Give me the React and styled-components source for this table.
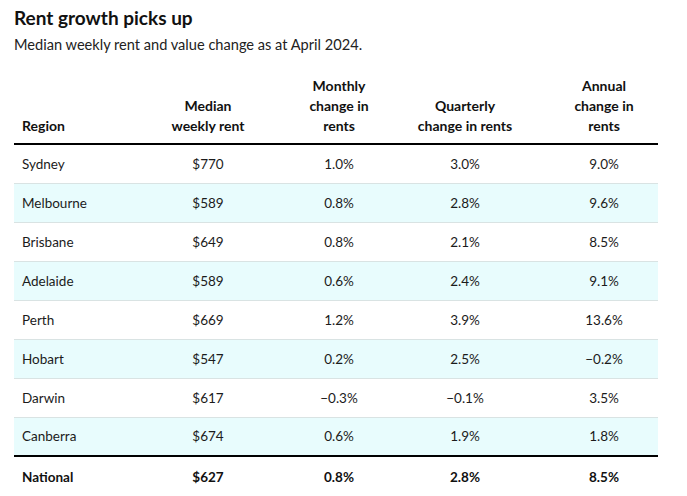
import styled, { createGlobalStyle } from "styled-components";

const GlobalStyle = createGlobalStyle`
  body {
    margin: 0;
    background: #ffffff;
    font-family: Lato, "Noto Sans", sans-serif;
    color: #1b1b1b;
  }
`;

const rows = [
  ["Sydney", "$770", "1.0%", "3.0%", "9.0%"],
  ["Melbourne", "$589", "0.8%", "2.8%", "9.6%"],
  ["Brisbane", "$649", "0.8%", "2.1%", "8.5%"],
  ["Adelaide", "$589", "0.6%", "2.4%", "9.1%"],
  ["Perth", "$669", "1.2%", "3.9%", "13.6%"],
  ["Hobart", "$547", "0.2%", "2.5%", "\u22120.2%"],
  ["Darwin", "$617", "\u22120.3%", "\u22120.1%", "3.5%"],
  ["Canberra", "$674", "0.6%", "1.9%", "1.8%"],
];

const national = ["National", "$627", "0.8%", "2.8%", "8.5%"];

const App = () => {
  return (
    <>
      <GlobalStyle />
      <Wrapper>
        <Title>Rent growth picks up</Title>
        <Subtitle>Median weekly rent and value change as at April 2024.</Subtitle>
        <Table>
          <colgroup>
            <col style={{ width: "104px" }} />
            <col style={{ width: "180px" }} />
            <col style={{ width: "82px" }} />
            <col style={{ width: "170px" }} />
            <col style={{ width: "108px" }} />
          </colgroup>
          <thead>
            <tr>
              <Th left>Region</Th>
              <Th>
                Median
                <br />
                weekly rent
              </Th>
              <Th>
                Monthly
                <br />
                change in
                <br />
                rents
              </Th>
              <Th>
                Quarterly
                <br />
                change in rents
              </Th>
              <Th>
                Annual
                <br />
                change in
                <br />
                rents
              </Th>
            </tr>
          </thead>
          <tbody>
            {rows.map((row, index) => (
              <Tr key={row[0]} shaded={index % 2 === 1} last={index === rows.length - 1}>
                {row.map((cell, i) => (
                  <Td key={i} left={i === 0}>
                    {cell}
                  </Td>
                ))}
              </Tr>
            ))}
          </tbody>
          <tfoot>
            <tr>
              {national.map((cell, i) => (
                <FootTd key={i} left={i === 0}>
                  {cell}
                </FootTd>
              ))}
            </tr>
          </tfoot>
        </Table>
      </Wrapper>
    </>
  );
};
export default App;

const Wrapper = styled.div`
  padding: 6px 29px 0 14px;
  width: 644px;
`;

const Title = styled.h1`
  margin: 0;
  font-size: 19px;
  line-height: 24px;
  font-weight: 700;
  color: #111;
`;

const Subtitle = styled.p`
  margin: 5px 0 0 0;
  font-size: 14.6px;
  line-height: 20px;
  color: #222;
`;

const Table = styled.table`
  width: 644px;
  table-layout: fixed;
  border-collapse: collapse;
  margin-top: 13px;
  font-size: 13.5px;
`;

const Th = styled.th`
  text-align: ${(p) => (p.left ? "left" : "center")};
  vertical-align: bottom;
  font-weight: 700;
  font-size: 14px;
  line-height: 20px;
  padding: 8px 8px 7px 8px;
  border-bottom: 2px solid #000;
  color: #111;
`;

const Tr = styled.tr`
  background: ${(p) => (p.shaded ? "#e8fcfd" : "#ffffff")};
  & > td {
    border-bottom: ${(p) => (p.last ? "2px solid #000" : "1px solid #d9e3e3")};
  }
`;

const Td = styled.td`
  text-align: ${(p) => (p.left ? "left" : "center")};
  height: 39px;
  padding: 0 8px;
  line-height: 20px;
  box-sizing: border-box;
`;

const FootTd = styled(Td)`
  font-weight: 700;
  height: 40px;
  color: #111;
`;
